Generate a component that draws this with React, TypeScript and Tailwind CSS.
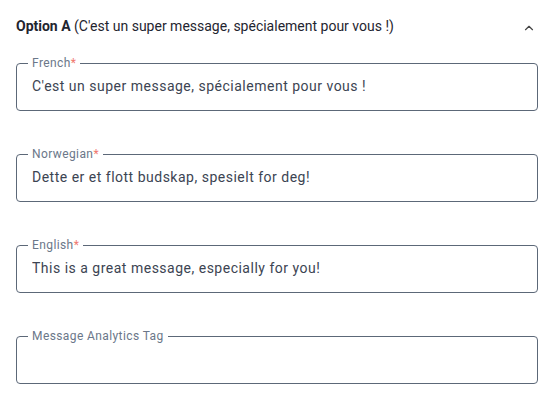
import { ChevronUp } from "lucide-react";

const FIELDS = [
  { label: "French", required: true, value: "C'est un super message, spécialement pour vous !" },
  { label: "Norwegian", required: true, value: "Dette er et flott budskap, spesielt for deg!" },
  { label: "English", required: true, value: "This is a great message, especially for you!" },
  { label: "Message Analytics Tag", required: false, value: "" },
];

export default function App() {
  return (
    <div className="min-h-screen bg-white px-4 pt-4 font-['Roboto',sans-serif]">
      <div className="flex items-center justify-between">
        <p className="text-[14px] leading-[20px] text-[#1f2530]">
          <span className="font-bold">Option A</span> (C'est un super message, spécialement pour vous !)
        </p>
        <ChevronUp className="mr-[2px] mt-[4px] h-[14px] w-[14px] text-[#444]" strokeWidth={2} />
      </div>

      <div className="mt-[21px] flex flex-col gap-[37px]">
        {FIELDS.map((f) => (
          <fieldset
            key={f.label}
            className="rounded-[4px] border border-[#5c6878] px-[11px] pb-[12px]"
          >
            <legend className="px-[4px] text-[12px] leading-[12px] tracking-[0.4px] text-[#6b7789]">
              {f.label}
              {f.required && <span className="text-[#f0786e]">*</span>}
            </legend>
            <input
              readOnly
              value={f.value}
              className="box-content block h-[24px] w-full pl-1 pt-[5px] text-[14px] leading-[24px] tracking-[0.5px] text-[#3c4452] outline-none"
            />
          </fieldset>
        ))}
      </div>
    </div>
  );
}
